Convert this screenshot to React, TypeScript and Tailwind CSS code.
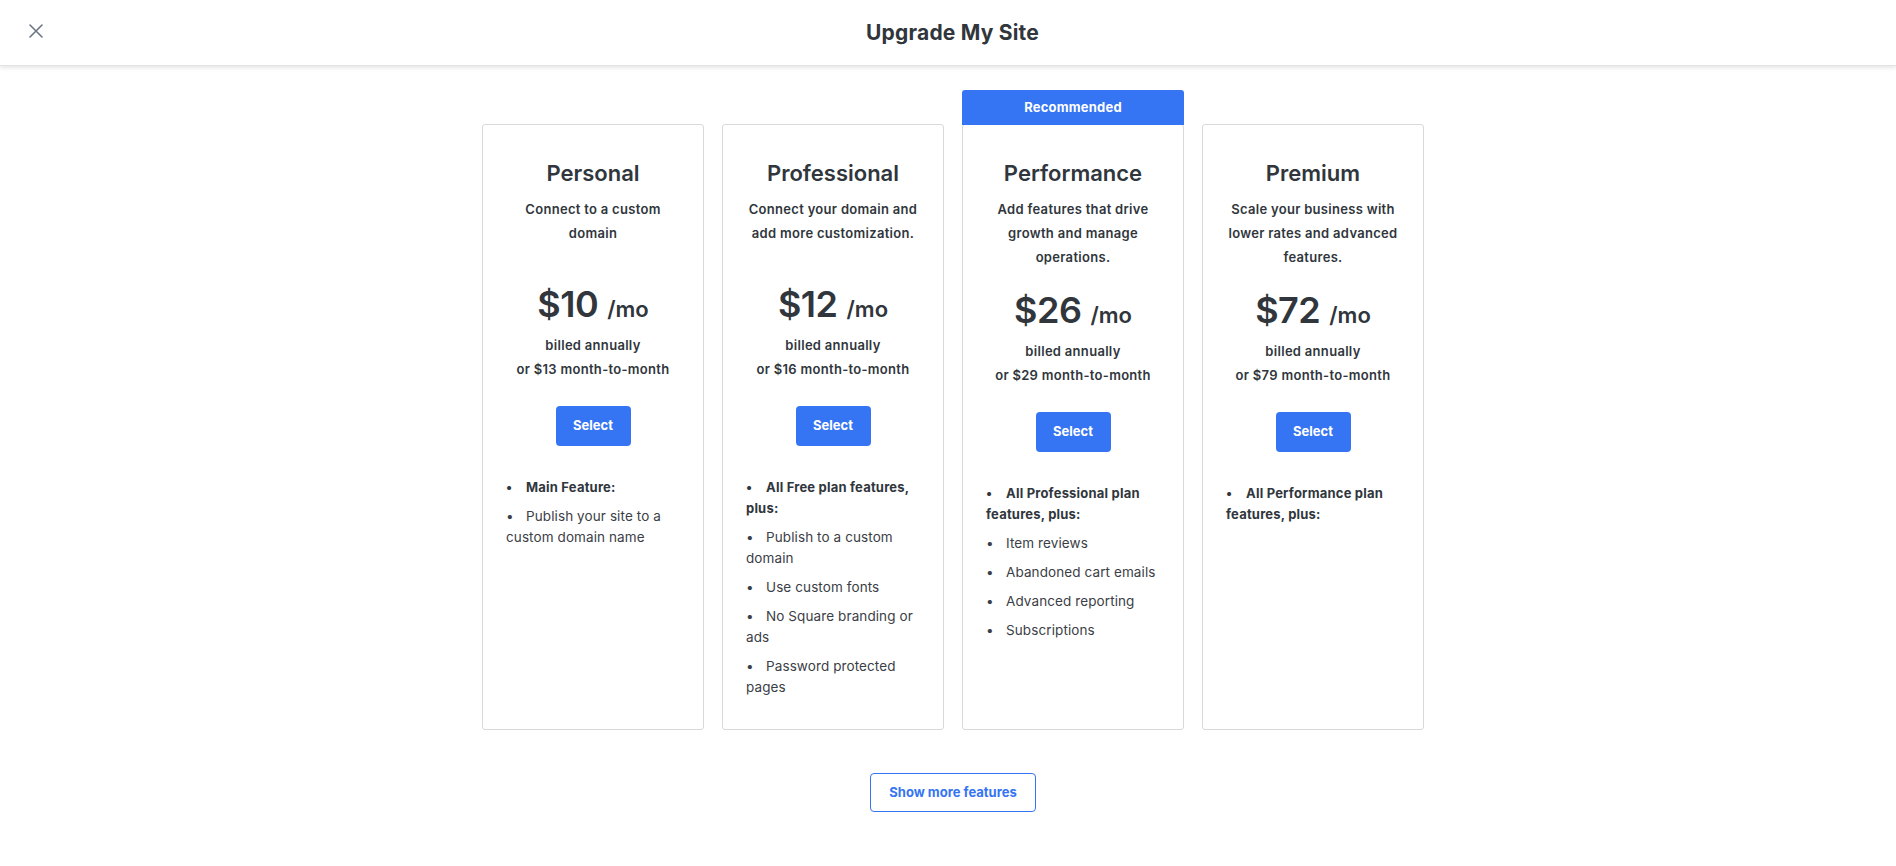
import React from "react";

type Plan = {
  name: string;
  description: string;
  price: string;
  billed: string;
  recommended?: boolean;
  features: { text: string; bold?: boolean }[];
};

const plans: Plan[] = [
  {
    name: "Personal",
    description: "Connect to a custom domain",
    price: "$10",
    billed: "or $13 month-to-month",
    features: [
      { text: "Main Feature:", bold: true },
      { text: "Publish your site to a custom domain name" },
    ],
  },
  {
    name: "Professional",
    description: "Connect your domain and add more customization.",
    price: "$12",
    billed: "or $16 month-to-month",
    features: [
      { text: "All Free plan features, plus:", bold: true },
      { text: "Publish to a custom domain" },
      { text: "Use custom fonts" },
      { text: "No Square branding or ads" },
      { text: "Password protected pages" },
    ],
  },
  {
    name: "Performance",
    description: "Add features that drive growth and manage operations.",
    price: "$26",
    billed: "or $29 month-to-month",
    recommended: true,
    features: [
      { text: "All Professional plan features, plus:", bold: true },
      { text: "Item reviews" },
      { text: "Abandoned cart emails" },
      { text: "Advanced reporting" },
      { text: "Subscriptions" },
    ],
  },
  {
    name: "Premium",
    description: "Scale your business with lower rates and advanced features.",
    price: "$72",
    billed: "or $79 month-to-month",
    features: [{ text: "All Performance plan features, plus:", bold: true }],
  },
];

const PlanCard = ({ plan }: { plan: Plan }) => (
  <div className="relative w-[222px] h-[606px] border border-[#d9d9d9] rounded-[3px] bg-white px-[23px] pt-[34px]">
    {plan.recommended && (
      <div className="absolute -top-[35px] -left-px -right-px h-[35px] bg-[#3574f2] rounded-t-[3px] flex items-center justify-center text-white text-[13px] font-bold tracking-[0.2px]">
        Recommended
      </div>
    )}
    <h2 className="text-center text-[22px] leading-[28px] font-semibold text-[#30363c]">
      {plan.name}
    </h2>
    <p className="mt-[10px] min-h-[66px] text-center text-[13px] leading-[24px] font-semibold tracking-[0.3px] text-[#30363c]">
      {plan.description}
    </p>
    <div className="mt-[17px] flex items-baseline justify-center leading-[48px] text-[#30363c]">
      <span className="text-[36px] font-semibold tracking-[-0.5px]">
        {plan.price}
      </span>
      <span className="ml-[9px] text-[22px] font-semibold">/mo</span>
    </div>
    <div className="text-center text-[13px] leading-[24px] font-semibold tracking-[0.3px] text-[#30363c]">
      <div>billed annually</div>
      <div>{plan.billed}</div>
    </div>
    <div className="mt-[25px] flex justify-center">
      <button className="w-[75px] h-[40px] rounded-[4px] bg-[#3574f2] text-white text-[13px] font-bold">
        Select
      </button>
    </div>
    <ul className="mt-[31px] flex flex-col gap-[8px]">
      {plan.features.map((f) => (
        <li
          key={f.text}
          className={
            f.bold
              ? "text-[13px] leading-[21px] font-bold tracking-[0.2px] text-[#30363c]"
              : "text-[13.5px] leading-[21px] tracking-[0.1px] text-[#3b4046]"
          }
        >
          <span className="inline-block w-[20px]">•</span>
          {f.text}
        </li>
      ))}
    </ul>
  </div>
);

export default function App() {
  return (
    <div
      className="min-h-screen bg-white"
      style={{ fontFamily: "Inter, 'Noto Sans', Arial, sans-serif" }}
    >
      <header className="relative h-[66px] flex items-center justify-center border-b border-[#e3e3e3] shadow-[0_2px_4px_rgba(0,0,0,0.10)] pl-[9px]">
        <button className="absolute left-[29px] top-[24px] w-[14px] h-[14px] text-[#6a7683]">
          <svg width="14" height="14" viewBox="0 0 14 14" fill="none">
            <path
              d="M1 1L13 13M13 1L1 13"
              stroke="currentColor"
              strokeWidth="1.6"
              strokeLinecap="round"
            />
          </svg>
        </button>
        <h1 className="text-[21px] font-bold tracking-[0.2px] text-[#30363c]">
          Upgrade My Site
        </h1>
      </header>

      <main className="pl-[10px] pt-[58px] flex flex-col items-center">
        <div className="flex gap-[18px]">
          {plans.map((p) => (
            <PlanCard key={p.name} plan={p} />
          ))}
        </div>
        <button className="mt-[43px] w-[166px] h-[39px] rounded-[4px] border border-[#3574f2] text-[#3574f2] text-[13px] font-bold">
          Show more features
        </button>
      </main>
    </div>
  );
}
